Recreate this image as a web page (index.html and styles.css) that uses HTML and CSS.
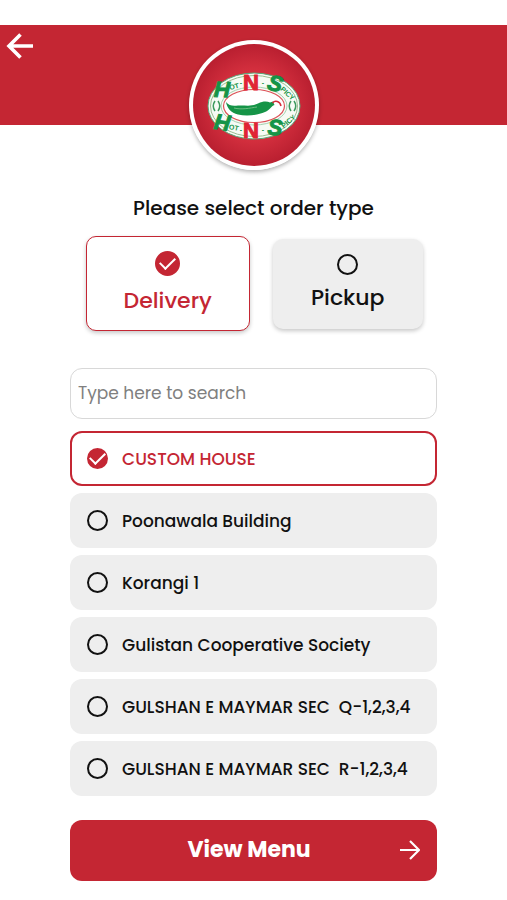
FILE: index.html
```html
<!DOCTYPE html>
<html lang="en">
<head>
<meta charset="utf-8">
<meta name="viewport" content="width=device-width, initial-scale=1">
<title>Hot N Spicy</title>
<link rel="stylesheet" href="styles.css">
</head>
<body>
<header class="banner">
  <button class="back" type="button" aria-label="Back">
    <svg width="28" height="26" viewBox="0 0 28 26" fill="none" stroke="currentColor" stroke-width="3.6"><path d="M27 13H3M14.500 1.500 3 13 14.500 24.500"/></svg>
  </button>
  <div class="logo">
    <svg viewBox="0 0 130 130" role="img" aria-label="Hot N Spicy">
      <defs>
        <radialGradient id="glow"><stop offset="0" stop-color="#e8404b"/><stop offset=".6" stop-color="#d22e3d"/><stop offset="1" stop-color="#b91f30"/></radialGradient>
      </defs>
      <circle cx="65" cy="65" r="65" fill="#fff"/>
      <circle cx="65" cy="65" r="61" fill="url(#glow)"/>
      <ellipse cx="65" cy="66" rx="46" ry="33" fill="#f7fbf5" stroke="#58a878"/>
      <ellipse cx="65" cy="66" rx="43.500" ry="30.500" fill="none" stroke="#9bbd91" stroke-width="1"/>
      <ellipse cx="65" cy="66" rx="33" ry="19" fill="none" stroke="#8fc5a0" stroke-width=".8"/>
      <ellipse cx="65" cy="66" rx="30.500" ry="16.500" fill="#fff" stroke="#dd5258" stroke-width="1.200"/>
      <path d="M37 62C40 66 44 66 49 65.500C56 65 62 67 69 63.500C74 61 78 61 81 62.500L84 61.500L85.500 65C82 66 81 70 76 72C68 75.500 57 76.500 49 74.500C42 73 38 68 37 62Z" fill="#159447"/>
      <path d="M45 68C53 70 61 68 68 67" fill="none" stroke="#6cbd82" stroke-width="1"/>
      <path d="M83.500 63C86 60 91 61 92 66" fill="none" stroke="#d52b38" stroke-width="1.500"/>
      <path class="logo-sides" d="M26 61Q22.500 66 26 71M29 61Q32.500 66 29 71M102 61Q98.500 66 102 71M105 61Q108.500 66 105 71"/>
      <g class="logo-big green">
        <text x="33" y="57" transform="rotate(2 33 50)">H</text>
        <text x="33" y="90" transform="rotate(8 33 83)">H</text>
        <text x="86" y="51" transform="rotate(14 86 44)">S</text>
        <text x="86" y="95" transform="rotate(4 86 88)">S</text>
      </g>
      <g class="logo-big red">
        <text x="62" y="50">N</text>
        <text x="62" y="98">N</text>
      </g>
      <g class="logo-small">
        <text x="45" y="49" transform="rotate(-14 45 46)">OT</text>
        <text x="52" y="45">-</text>
        <text x="74" y="45">-</text>
        <text x="99" y="56" transform="rotate(42 99 53)">PICY</text>
        <text x="45" y="90" transform="rotate(12 45 87)">OT</text>
        <text x="52" y="92">-</text>
        <text x="74" y="92">-</text>
        <text x="99" y="84" transform="rotate(-40 99 81)">PICY</text>
      </g>
    </svg>
  </div>
</header>
<main>
  <form class="order">
    <fieldset class="types">
      <legend>Please select order type</legend>
      <div class="cards">
        <label class="card"><input type="radio" name="type" checked><span>Delivery</span></label>
        <label class="card"><input type="radio" name="type"><span>Pickup</span></label>
      </div>
    </fieldset>
    <input class="search" type="search" placeholder="Type here to search" aria-label="Search locations">
    <div class="places" role="radiogroup" aria-label="Location">
      <label class="place"><input type="radio" name="place" checked><span>CUSTOM HOUSE</span></label>
      <label class="place"><input type="radio" name="place"><span>Poonawala Building</span></label>
      <label class="place"><input type="radio" name="place"><span>Korangi 1</span></label>
      <label class="place"><input type="radio" name="place"><span>Gulistan Cooperative Society</span></label>
      <label class="place"><input type="radio" name="place"><span>GULSHAN E MAYMAR SEC&nbsp; Q-1,2,3,4</span></label>
      <label class="place"><input type="radio" name="place"><span>GULSHAN E MAYMAR SEC&nbsp; R-1,2,3,4</span></label>
    </div>
    <button class="submit" type="button">
      <span>View Menu</span>
      <svg width="20" height="20" viewBox="0 0 20 20" fill="none" stroke="currentColor" stroke-width="2.200"><path d="M0 10H18M10 1 19 10 10 19"/></svg>
    </button>
  </form>
</main>
</body>
</html>
```
FILE: styles.css
```css
:root {
  --red: #c42633;
  --grey: #eee;
  --ink: #111;
}

* {
  box-sizing: border-box;
}

body {
  margin: 0;
  padding-top: 25px;
  background: #fff;
  color: var(--ink);
  font-family: Poppins, Inter, sans-serif;
  font-weight: 500;
}

input,
button {
  font: inherit;
}

.banner {
  position: relative;
  height: 100px;
  padding: 8px 6px;
  background: var(--red);
}

.back {
  display: block;
  padding: 0;
  border: 0;
  background: none;
  color: #fff;
  cursor: pointer;
}

.back svg {
  display: block;
}

.logo {
  position: absolute;
  top: 15px;
  left: 50%;
  width: 130px;
  height: 130px;
  border-radius: 50%;
  box-shadow: 0 2px 4px rgba(0, 0, 0, 0.3);
  transform: translateX(-50%);
}

.logo svg {
  display: block;
}

.logo text {
  text-anchor: middle;
  font-family: "Liberation Sans", sans-serif;
  font-weight: 700;
}

.logo .logo-big {
  font-size: 22px;
  font-style: italic;
}

.green {
  fill: #159447;
  stroke: #159447;
}

.logo .red {
  fill: #e02433;
  stroke: #e02433;
  font-style: normal;
}

.logo-small {
  fill: #159447;
  font-size: 7px;
}

.logo-sides {
  fill: none;
  stroke: #3e9b5e;
  stroke-width: 1.5;
}

.order {
  display: flex;
  flex-direction: column;
  padding: 68px 70px 20px;
}

.types {
  min-width: 0;
  margin: 0;
  padding: 0;
  border: 0;
}

legend {
  width: 100%;
  padding: 0;
  font-size: 20px;
  line-height: 30px;
  text-align: center;
}

.cards {
  display: flex;
  align-items: center;
  gap: 23px;
  margin: 13px 14px 0 16px;
}

.card {
  display: flex;
  flex: 1 1 150px;
  flex-direction: column;
  align-items: center;
  gap: 7px;
  height: 90px;
  padding-top: 15px;
  border-radius: 10px;
  background: var(--grey);
  box-shadow: 0 2px 4px rgba(0, 0, 0, 0.22);
  font-size: 22px;
  line-height: 32px;
  cursor: pointer;
}

.card:has(:checked) {
  flex-basis: 163px;
  gap: 9px;
  height: 95px;
  padding-top: 14px;
  border: 1px solid var(--red);
  background: #fff;
  color: var(--red);
}

input[type="radio"] {
  display: grid;
  flex: none;
  place-items: center;
  width: 21px;
  height: 21px;
  margin: 0;
  border: 2px solid var(--ink);
  border-radius: 50%;
  appearance: none;
}

input[type="radio"]:checked {
  border-color: var(--red);
  background: var(--red);
}

input[type="radio"]:checked::before {
  width: 13px;
  height: 7px;
  margin-bottom: 4px;
  border: solid #fff;
  border-width: 0 0 2px 2px;
  content: "";
  transform: rotate(-45deg);
}

.card input[type="radio"]:checked {
  width: 25px;
  height: 25px;
}

.search {
  width: 100%;
  height: 51px;
  margin-top: 37px;
  padding: 0 7px 2px;
  border: 1px solid #d8d8d8;
  border-radius: 12px;
  appearance: none;
  background: #fff;
  font-size: 17px;
  font-weight: 400;
}

.search::placeholder {
  color: #808080;
  opacity: 1;
}

.places {
  display: flex;
  flex-direction: column;
  gap: 7px;
  margin-top: 12px;
}

.place {
  display: flex;
  align-items: center;
  gap: 14px;
  height: 55px;
  padding: 0 17px;
  border-radius: 12px;
  background: var(--grey);
  font-size: 17px;
  line-height: 24px;
  cursor: pointer;
}

.place:has(:checked) {
  padding: 0 15px;
  border: 2px solid var(--red);
  background: #fff;
  color: var(--red);
}

.submit {
  display: grid;
  grid-template-columns: 1fr 20px;
  align-items: center;
  height: 61px;
  margin-top: 24px;
  padding: 0 17px 2px 28px;
  border: 0;
  border-radius: 12px;
  background: var(--red);
  color: #fff;
  font-size: 22px;
  font-weight: 700;
  cursor: pointer;
}
```
